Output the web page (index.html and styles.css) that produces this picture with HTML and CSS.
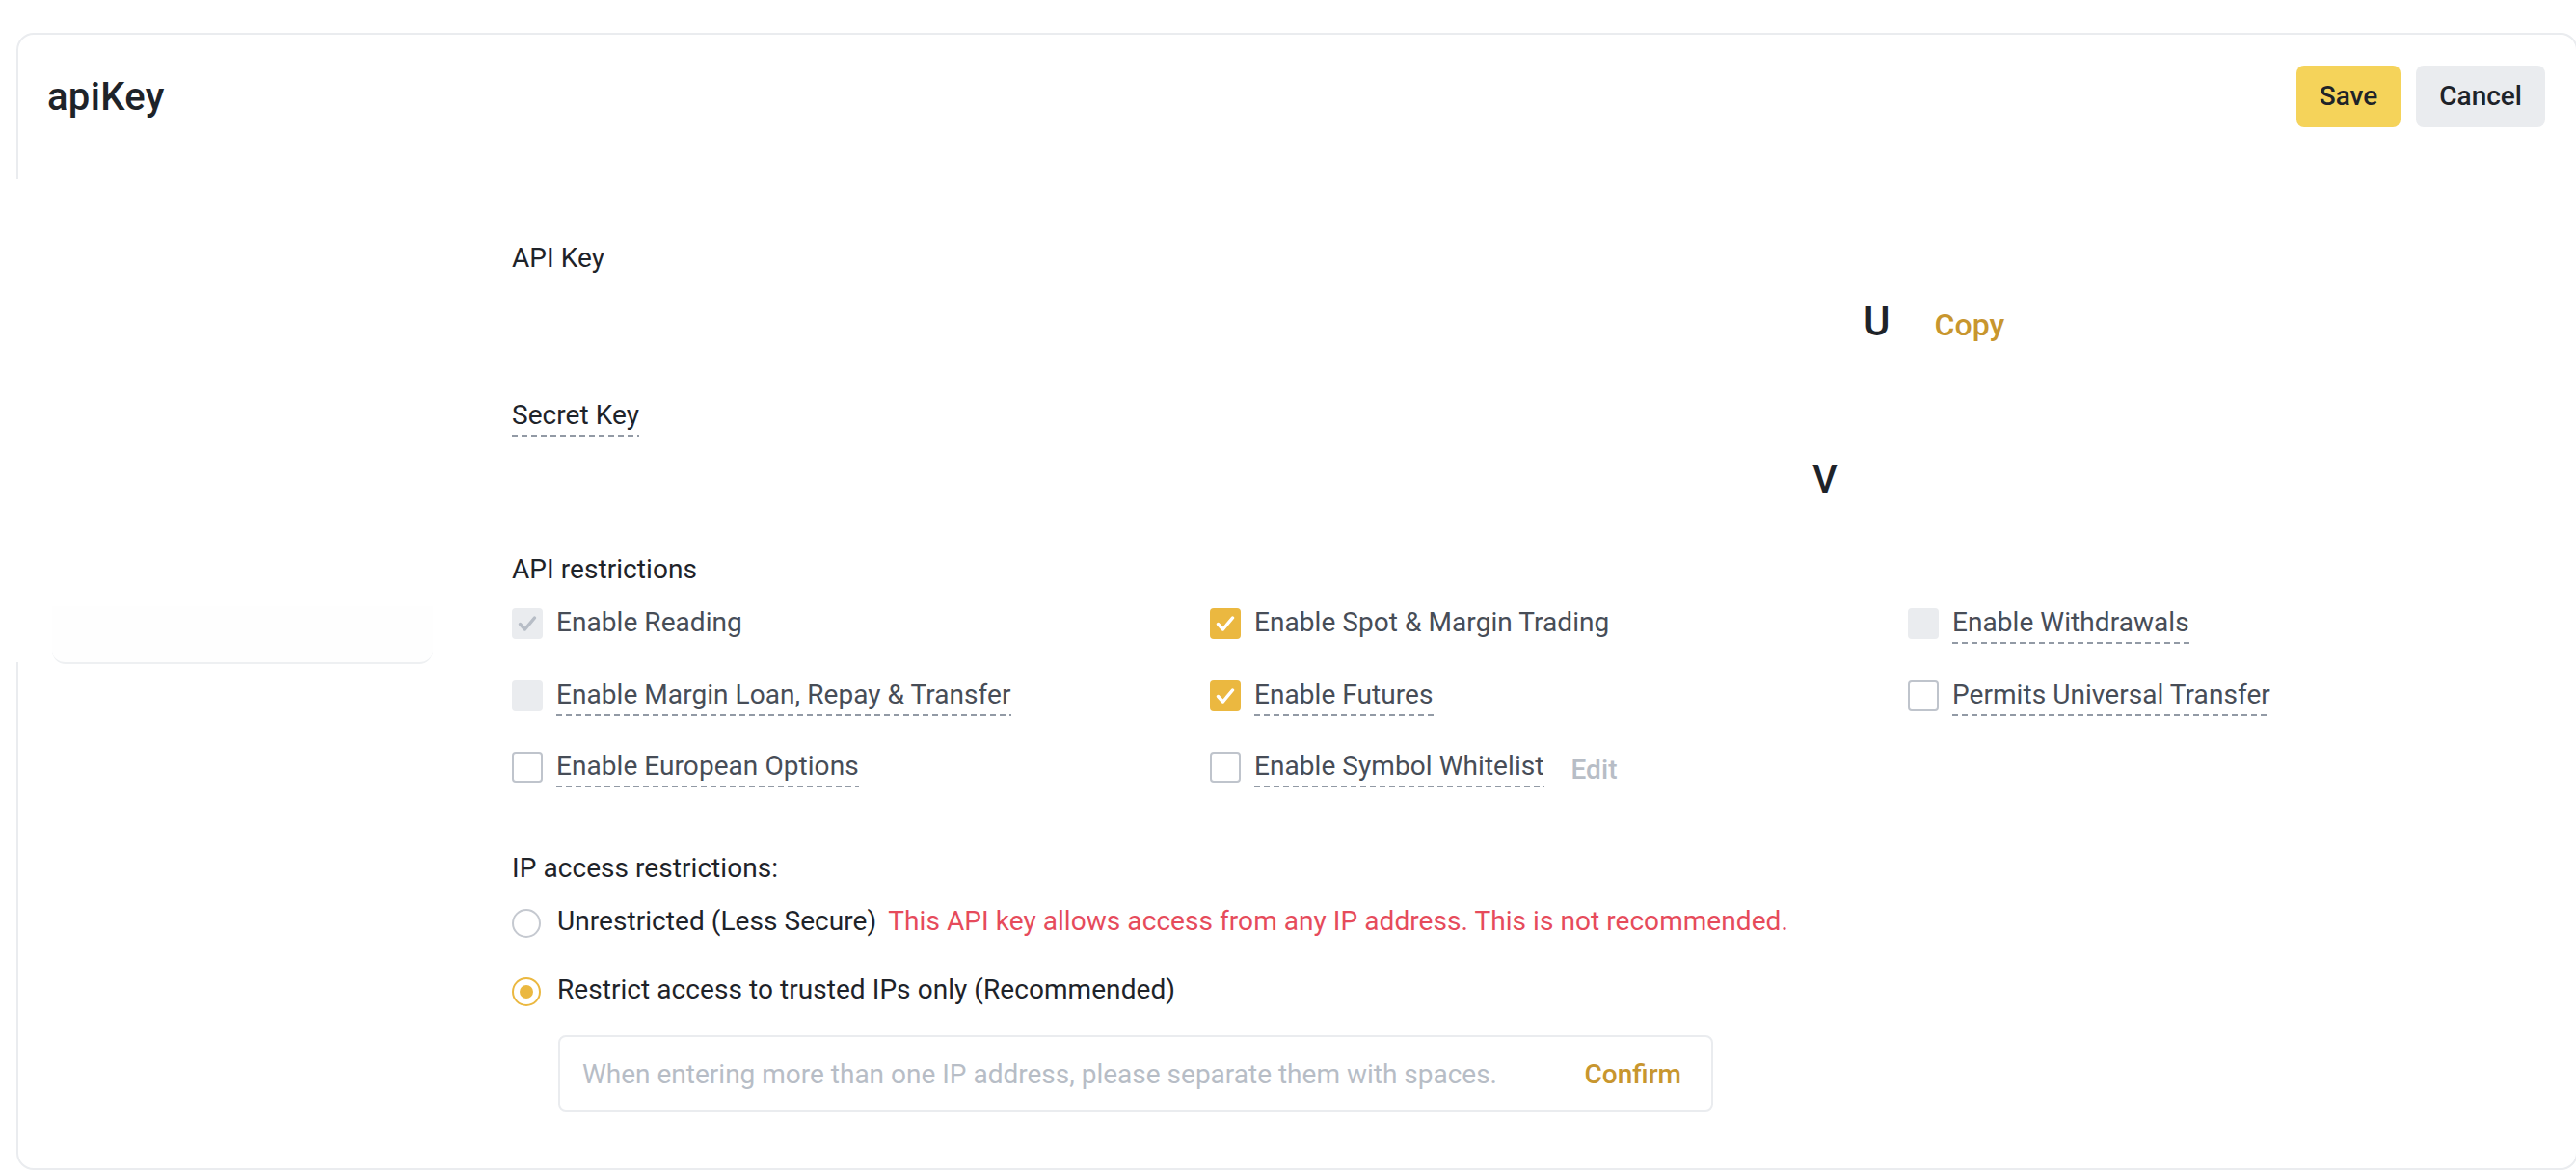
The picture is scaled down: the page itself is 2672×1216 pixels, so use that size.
FILE: index.html
```html
<!DOCTYPE html>
<html lang="en">
<head>
<meta charset="utf-8">
<title>apiKey</title>
<link rel="stylesheet" href="styles.css">
</head>
<body>
<div class="overlay"><div class="side-panel"></div></div>
<section class="card">
  <header class="card-head">
    <h1 class="title">apiKey</h1>
    <div class="actions">
      <button class="btn btn-save">Save</button>
      <button class="btn btn-cancel">Cancel</button>
    </div>
  </header>
  <div class="content">
    <div class="field-label">API Key</div>
    <div class="key-row api-row"><span class="glyph glyph-u">U</span><span class="copy">Copy</span></div>
    <div class="field-label secret-title"><span class="dashed">Secret Key</span></div>
    <div class="key-row secret-row"><span class="glyph glyph-v">V</span></div>
    <div class="field-label restr-title">API restrictions</div>
    <div class="perm-grid">
      <div class="perm"><span class="cb cb-disabled-checked"><svg viewBox="0 0 32 32"><path d="M8.5 16.5l5 5.5 10-12"/></svg></span><span class="perm-label">Enable Reading</span></div>
      <div class="perm"><span class="cb cb-checked"><svg viewBox="0 0 32 32"><path d="M8.5 16.5l5 5.5 10-12"/></svg></span><span class="perm-label">Enable Spot &amp; Margin Trading</span></div>
      <div class="perm"><span class="cb cb-disabled"></span><span class="perm-label dashed">Enable Withdrawals</span></div>
      <div class="perm"><span class="cb cb-disabled"></span><span class="perm-label dashed">Enable Margin Loan, Repay &amp; Transfer</span></div>
      <div class="perm"><span class="cb cb-checked"><svg viewBox="0 0 32 32"><path d="M8.5 16.5l5 5.5 10-12"/></svg></span><span class="perm-label dashed">Enable Futures</span></div>
      <div class="perm"><span class="cb"></span><span class="perm-label dashed">Permits Universal Transfer</span></div>
      <div class="perm"><span class="cb"></span><span class="perm-label dashed">Enable European Options</span></div>
      <div class="perm"><span class="cb"></span><span class="perm-label dashed">Enable Symbol Whitelist</span><span class="edit">Edit</span></div>
    </div>
    <div class="field-label ip-title">IP access restrictions:</div>
    <div class="radio-row first"><span class="radio"></span><span class="radio-label">Unrestricted (Less Secure)</span><span class="warn">This API key allows access from any IP address. This is not recommended.</span></div>
    <div class="radio-row second"><span class="radio radio-on"></span><span class="radio-label">Restrict access to trusted IPs only (Recommended)</span></div>
    <div class="ip-input"><span class="placeholder">When entering more than one IP address, please separate them with spaces.</span><span class="confirm">Confirm</span></div>
  </div>
</section>
</body>
</html>
```

FILE: styles.css
```css
* { box-sizing: border-box; }

html, body {
  margin: 0;
  padding: 0;
  background: #ffffff;
}

body {
  width: 2672px;
  height: 1216px;
  overflow: hidden;
  position: relative;
  font-family: Roboto, "Liberation Sans", Arial, sans-serif;
  color: #1E2329;
}

.card {
  margin: 34px 0 0 17px;
  width: 2657px;
  border: 2px solid #EAECEF;
  border-radius: 18px;
  background: #ffffff;
  padding: 0 32px 58px 30px;
}

.card-head {
  display: flex;
  align-items: center;
  justify-content: space-between;
  padding-top: 32px;
  height: 96px;
}

.title {
  margin: 2px 0 0 0;
  font-size: 40px;
  line-height: 56px;
  font-weight: 500;
  letter-spacing: 0.3px;
  color: #1E2329;
}

.actions {
  display: flex;
  gap: 16px;
}

.btn {
  height: 64px;
  padding: 0 24px;
  border: none;
  border-radius: 8px;
  font-family: inherit;
  font-size: 28px;
  font-weight: 500;
  line-height: 64px;
  color: #1E2329;
}

.btn-save { background: #F5D35A; }
.btn-cancel { background: #EAECEF; }

.content {
  position: relative;
  z-index: 1;
  padding-left: 482px;
  padding-top: 116px;
  letter-spacing: 0.06px;
}

.field-label {
  display: flex;
  font-size: 28px;
  line-height: 40px;
  color: #1E2329;
}

.dashed {
  padding-bottom: 2px;
  background-image: linear-gradient(to right, #929AA5 60%, transparent 60%);
  background-size: 10px 2px;
  background-repeat: repeat-x;
  background-position: left bottom;
}

.key-row {
  display: flex;
  align-items: baseline;
  height: 56px;
}

.api-row {
  margin-top: 18px;
  padding-left: 1402px;
}

.secret-title { margin-top: 49px; }

.secret-row {
  margin-top: 17px;
  padding-left: 1349px;
}

.glyph {
  font-weight: 500;
  line-height: 56px;
  color: #1E2329;
}

.glyph-u { font-size: 42px; }
.glyph-v { font-size: 40px; }

.copy {
  margin-left: 46px;
  font-size: 32px;
  font-weight: 500;
  color: #C8962E;
}

.restr-title { margin-top: 45px; }

.perm-grid {
  margin-top: 15px;
  display: grid;
  grid-template-columns: repeat(3, 724px);
  row-gap: 32.5px;
}

.perm {
  display: flex;
  align-items: center;
  height: 42px;
}

.cb {
  flex: none;
  width: 32px;
  height: 32px;
  border-radius: 4px;
  border: 2px solid #BFC4CC;
  background: #ffffff;
  margin-right: 14px;
  display: flex;
  align-items: center;
  justify-content: center;
}

.cb svg {
  width: 32px;
  height: 32px;
  fill: none;
  stroke-width: 3.4;
  stroke-linecap: round;
  stroke-linejoin: round;
}

.cb-checked {
  border: none;
  background: #EBB840;
}
.cb-checked svg { stroke: #ffffff; }

.cb-disabled {
  border: none;
  background: #EAECEF;
}

.cb-disabled-checked {
  border: none;
  background: #EAECEF;
}
.cb-disabled-checked svg { stroke: #B7BDC6; }

.perm-label {
  font-size: 28px;
  line-height: 40px;
  color: #474D57;
  padding-bottom: 2px;
  white-space: nowrap;
}

.edit {
  align-self: flex-end;
  margin-left: 28px;
  font-size: 28px;
  line-height: 36px;
  font-weight: 500;
  color: #B7BDC6;
}

.ip-title { margin-top: 64px; }

.radio-row {
  display: flex;
  align-items: center;
  height: 40px;
  font-size: 28px;
  line-height: 40px;
}

.radio-row.first { margin-top: 15px; }
.radio-row.second { margin-top: 31px; }

.radio {
  flex: none;
  width: 30px;
  height: 30px;
  margin-top: 4px;
  margin-right: 17px;
  border-radius: 50%;
  border: 2px solid #C5C9D0;
  background: #ffffff;
  display: flex;
  align-items: center;
  justify-content: center;
}

.radio-on {
  border-color: #EBB840;
}

.radio-on::after {
  content: "";
  width: 14px;
  height: 14px;
  border-radius: 50%;
  background: #EBB840;
}

.radio-label { color: #1E2329; }

.warn {
  margin-left: 12px;
  color: #E64B5B;
}

.ip-input {
  margin-top: 27px;
  margin-left: 48px;
  width: 1198px;
  height: 80px;
  border: 2px solid #EAECEF;
  border-radius: 8px;
  display: flex;
  align-items: center;
  justify-content: space-between;
  padding: 0 31px 0 23px;
  font-size: 28px;
  letter-spacing: 0;
}

.placeholder { color: #B7BDC6; }

.confirm {
  font-weight: 500;
  color: #C8962E;
}

.overlay {
  position: absolute;
  left: 0;
  top: 186px;
  width: 2672px;
  height: 501px;
  background: #ffffff;
  z-index: 0;
}

.side-panel {
  position: absolute;
  left: 54px;
  bottom: -2px;
  width: 395px;
  height: 60px;
  background: #FEFEFE;
  border-bottom: 2px solid #EEF0F2;
  border-radius: 0 0 14px 14px;
}
```
